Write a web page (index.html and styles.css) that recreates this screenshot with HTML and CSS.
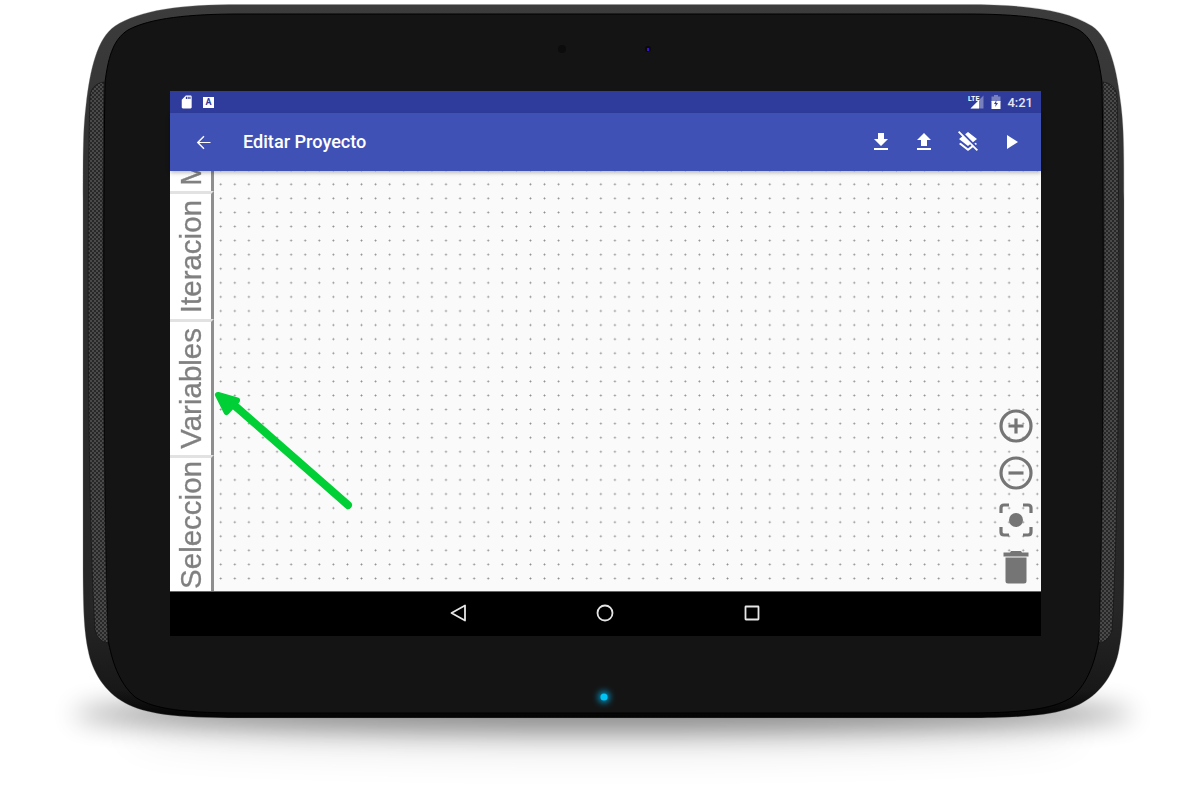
FILE: index.html
```html
<!DOCTYPE html>
<html lang="es">
<head>
  <meta charset="UTF-8" />
  <title>Editar Proyecto</title>
  <link rel="stylesheet" href="styles.css">
</head>
<body>
  <div class="device">
    <!-- Carcasa de la tablet -->
    <svg class="shell" width="1200" height="797" viewBox="0 0 1200 797">
      <defs>
        <filter id="blur-shadow" x="-10%" y="-100%" width="120%" height="300%"><feGaussianBlur stdDeviation="13"/></filter>
        <filter id="blur-wide" x="-10%" y="-100%" width="120%" height="300%"><feGaussianBlur stdDeviation="20"/></filter>
        <filter id="blur-led" x="-200%" y="-200%" width="500%" height="500%"><feGaussianBlur stdDeviation="3"/></filter>
        <linearGradient id="rim" x1="0" y1="0" x2="0" y2="1">
          <stop offset="0" stop-color="#3c3c3c"/>
          <stop offset="0.25" stop-color="#303030"/>
          <stop offset="0.85" stop-color="#262626"/>
          <stop offset="0.96" stop-color="#181818"/>
          <stop offset="1" stop-color="#030303"/>
        </linearGradient>
        <pattern id="grille" width="4" height="4" patternUnits="userSpaceOnUse">
          <rect width="4" height="4" fill="#4a4a4a"/>
          <circle cx="1" cy="1" r="1" fill="#1c1c1c"/>
          <circle cx="3" cy="3" r="1" fill="#1c1c1c"/>
        </pattern>
      </defs>
      <ellipse cx="603" cy="714" rx="530" ry="18" fill="#000" opacity="0.42" filter="url(#blur-shadow)"/>
      <ellipse cx="603" cy="732" rx="480" ry="18" fill="#000" opacity="0.1" filter="url(#blur-wide)"/>
      <path fill="url(#rim)" stroke="#8a8a8a" stroke-opacity="0.5" stroke-width="0.6" d="M240 4.500C180 4.500 140 10 115 26C97 38 90 70 86 105C83 130 83 150 83 200L83 560C83 610 84 630 88 650C92 672 105 692 125 703C145 714 175 718 240 718L967 718C1032 718 1062 714 1082 703C1102 692 1115 672 1119 650C1123 630 1124 610 1124 560L1124 200C1124 150 1124 130 1121 105C1117 70 1110 38 1092 26C1067 10 1027 4.500 967 4.500Z"/>
      <path fill="#141414" stroke="#000" stroke-width="1" d="M240 14C190 14 150 18 128 30C112 40 108 60 105 82C103 200 103 500 108 640C112 660 118 682 135 697C150 707 175 713 240 713L967 713C1032 713 1057 707 1072 697C1089 682 1095 660 1099 640C1104 500 1104 200 1102 82C1099 60 1095 40 1079 30C1057 18 1017 14 967 14Z"/>
      <path fill="url(#grille)" stroke="#111" stroke-width="0.6" d="M104 82C96 83 91 88 90 96C87 200 87 500 95 630C97 638 102 642 108 643C103 500 102 200 104 82Z"/>
      <path fill="url(#grille)" stroke="#111" stroke-width="0.6" d="M1103 82C1111 83 1116 88 1117 96C1120 200 1120 500 1112 630C1110 638 1105 642 1099 643C1104 500 1105 200 1103 82Z"/>
      <circle cx="562" cy="49" r="4" fill="#0c0c0c"/>
      <circle cx="648" cy="49" r="3" fill="#0a0a0a"/>
      <rect x="647" y="48" width="2" height="3" fill="#3a14c8"/>
      <circle cx="604" cy="697" r="6" fill="#00b4ee" opacity="0.75" filter="url(#blur-led)"/>
      <circle cx="604" cy="697" r="3.600" fill="#00c4f4"/>
    </svg>

    <div class="screen">
      <div class="status-bar">
        <svg class="status-icon" width="14" height="14" viewBox="0 0 24 24"><path fill="#fff" d="M18 1h-8L3 8v13c0 1.100.9 2 2 2h13c1.100 0 2-.9 2-2V3c0-1.100-.9-2-2-2zm-6 6h-2V3h2v4zm3 0h-2V3h2v4zm3 0h-2V3h2v4z"/></svg>
        <span class="status-a">A</span>
        <span class="status-right">
          <span class="status-lte">LTE</span>
          <svg class="status-signal" width="14" height="14" viewBox="0 0 14 14"><path fill="#fff" fill-opacity="0.35" d="M13.500 0.500V13.500H0.500Z"/><path fill="#fff" d="M9 5V13.500H0.500Z"/></svg>
          <svg class="status-battery" width="10" height="14" viewBox="0 0 10 14"><path fill="#fff" fill-opacity="0.35" d="M3 0H7V1.500H9.500V7H0.500V1.500H3Z"/><path fill="#fff" d="M0.500 6H9.500V14H0.500Z"/><path fill="#303f9f" d="M5.500 5L3 9H4.700L4.200 12L7 8H5.200Z"/></svg>
          <span class="status-time">4:21</span>
        </span>
      </div>

      <header class="app-bar">
        <svg class="back-icon" width="21" height="21" viewBox="0 0 24 24"><path d="M20 11.300H7.200l5.900-5.900L12 4.300 4.300 12l7.700 7.700 1.100-1.100-5.900-5.900H20z"/></svg>
        <h1>Editar Proyecto</h1>
        <div class="app-actions">
          <svg width="24" height="24" viewBox="0 0 24 24"><path d="M19 9h-4V3H9v6H5l7 7 7-7zM5 18v2h14v-2H5z"/></svg>
          <svg width="24" height="24" viewBox="0 0 24 24"><path d="M9 16h6v-6h4l-7-7-7 7h4zm-4 2h14v2H5z"/></svg>
          <svg width="24" height="24" viewBox="0 0 24 24"><path d="M19.810 14.990l1.190-.92-1.430-1.430-1.180.91 1.420 1.440zm-.45-4.720L21 9l-9-7-2.910 2.270 7.870 7.880 2.400-1.880zM3.270 1L2 2.270l4.220 4.220L3 9l1.630 1.270L12 16l2.100-1.630 1.430 1.430L12 18.540l-7.370-5.730L3 14.070l9 7 4.950-3.850L20.730 21 22 19.730 3.270 1z"/></svg>
          <svg width="24" height="24" viewBox="0 0 24 24"><path d="M8 5v14l11-7z"/></svg>
        </div>
      </header>

      <main class="workspace">
        <nav class="tabs">
          <div class="tab tab-short"><span>Movimiento</span></div>
          <div class="tab tab-iter"><span>Iteracion</span></div>
          <div class="tab"><span>Variables</span></div>
          <div class="tab"><span>Seleccion</span></div>
        </nav>
        <div class="canvas">
          <div class="zoom-tools">
            <svg width="40" height="40" viewBox="0 0 40 40"><circle cx="20" cy="20" r="15" class="line"/><path class="line" d="M20 12.500v15M12.500 20h15"/></svg>
            <svg width="40" height="40" viewBox="0 0 40 40"><circle cx="20" cy="20" r="15" class="line"/><path class="line" d="M12.500 20h15"/></svg>
            <svg width="40" height="40" viewBox="0 0 40 40"><path class="line" d="M13 5H8Q5 5 5 8V13M27 5H32Q35 5 35 8V13M5 27V32Q5 35 8 35H13M35 27V32Q35 35 32 35H27"/><circle cx="20" cy="20" r="7" class="solid"/></svg>
            <svg width="40" height="40" viewBox="0 0 40 40"><path class="solid" d="M15 4h10l1 1.500h6.500v4h-25v-4H14zM9.500 10.500h21V34q0 2.500-2.500 2.500H12q-2.500 0-2.500-2.500z"/></svg>
          </div>
        </div>
        <!-- Flecha verde que marca la pestana -->
        <svg class="arrow" width="150" height="130" viewBox="0 0 150 130">
          <path class="arrow-line" d="M136 114L22 14"/>
          <path class="arrow-head" d="M6 4L25 9.500L14.500 21Z"/>
        </svg>
      </main>

      <footer class="nav-bar">
        <div class="nav-key"><svg width="24" height="24" viewBox="0 0 24 24"><path d="M19 4.500V19.500L5.500 12Z"/></svg></div>
        <div class="nav-key"><svg width="24" height="24" viewBox="0 0 24 24"><circle cx="12" cy="12" r="7.500"/></svg></div>
        <div class="nav-key"><svg width="24" height="24" viewBox="0 0 24 24"><rect x="5.500" y="5.500" width="13" height="13" rx="0.500"/></svg></div>
      </footer>
    </div>
  </div>
</body>
</html>
```

FILE: styles.css
```css
/* Reset */
*, *::before, *::after {
  box-sizing: border-box;
}
body {
  margin: 0;
  background-color: #fff;
  font-family: 'Roboto', sans-serif;
  overflow: hidden;
}
/* Marco de la tablet */
.device {
  position: relative;
  width: 1200px;
  height: 797px;
  padding: 91px 0 0 170px;
}
.shell {
  position: absolute;
  top: 0;
  left: 0;
}
.screen {
  position: relative;
  width: 871px;
  height: 545px;
  display: flex;
  flex-direction: column;
  background-color: #000;
}
/* Barra de estado */
.status-bar {
  height: 22px;
  flex: none;
  display: flex;
  align-items: center;
  padding: 0 8px 0 10px;
  background-color: #303c9c;
  color: #fff;
}
.status-a {
  width: 11px;
  height: 11px;
  margin-left: 9px;
  background-color: #fff;
  color: #303c9c;
  font-size: 9px;
  font-weight: 700;
  line-height: 11px;
  text-align: center;
}
.status-right {
  margin-left: auto;
  display: flex;
  align-items: center;
}
.status-lte {
  font-size: 7px;
  font-weight: 700;
  line-height: 8px;
  margin-bottom: 7px;
  margin-right: -9px;
  position: relative;
  z-index: 1;
}
.status-signal {
  margin-left: 0;
}
.status-battery {
  margin-left: 7px;
}
.status-time {
  margin-left: 6px;
  font-size: 13px;
  font-weight: 500;
  color: #e4e6f4;
}
/* Barra superior */
.app-bar {
  height: 58px;
  flex: none;
  display: flex;
  align-items: center;
  padding-left: 22.5px;
  padding-right: 18px;
  background-color: #3f51b5;
  color: #fff;
  position: relative;
  z-index: 2;
  box-shadow: 0 2px 4px rgba(0,0,0,0.25);
}
.app-bar svg {
  fill: #fff;
  flex: none;
}
.app-bar h1 {
  margin: 1px 0 0 29.5px;
  font-size: 18.1px;
  font-weight: 500;
  line-height: 1;
}
.app-actions {
  margin-left: auto;
  display: flex;
  gap: 19.3px;
}
/* Area de trabajo */
.workspace {
  position: relative;
  height: 420px;
  flex: none;
  display: flex;
  overflow: hidden;
  background-color: #fafafa;
}
.tabs {
  width: 44px;
  flex: none;
  display: flex;
  flex-direction: column;
  justify-content: flex-end;
  overflow: hidden;
  background-color: #fff;
}
.tab {
  height: 136px;
  flex: none;
  display: flex;
  align-items: center;
  justify-content: center;
  border-top: 3px solid #e2e2e2;
  border-right: 3px solid #8e8e8e;
}
.tab span {
  writing-mode: vertical-rl;
  transform: rotate(180deg);
  font-family: 'Liberation Sans', Arial, sans-serif;
  font-size: 29.5px;
  line-height: 1;
  color: #808080;
  -webkit-text-stroke: 0.3px #808080;
  white-space: nowrap;
}
.tab-iter {
  height: 128px;
}
.tab-short {
  height: 170px;
  align-items: flex-end;
  padding-bottom: 5px;
}
.canvas {
  flex: 1;
  position: relative;
  background-image: radial-gradient(circle, #8a8a8a 0.7px, transparent 1.2px);
  background-size: 14.08px 14.08px;
  background-position: -0.3px 6.26px;
}
.zoom-tools {
  position: absolute;
  right: 5px;
  top: 235px;
  display: flex;
  flex-direction: column;
  gap: 7px;
}
.zoom-tools svg {
  display: block;
}
.line {
  fill: none;
  stroke: #757575;
  stroke-width: 3.2;
}
.solid {
  fill: #757575;
}
.arrow {
  position: absolute;
  left: 42px;
  top: 220px;
}
.arrow-line {
  fill: none;
  stroke: #00cf35;
  stroke-width: 8;
  stroke-linecap: round;
}
.arrow-head {
  fill: #00cf35;
  stroke: #00cf35;
  stroke-width: 6;
  stroke-linejoin: round;
}
/* Barra de navegacion */
.nav-bar {
  flex: 1;
  display: flex;
  justify-content: center;
  align-items: center;
  padding: 0 2px 2px 0;
  background-color: #000;
  border-top: 1px solid #666;
}
.nav-key {
  width: 147px;
  display: flex;
  justify-content: center;
}
.nav-key svg {
  fill: none;
  stroke: #e6e6e6;
  stroke-width: 1.8;
  stroke-linejoin: round;
}
```
